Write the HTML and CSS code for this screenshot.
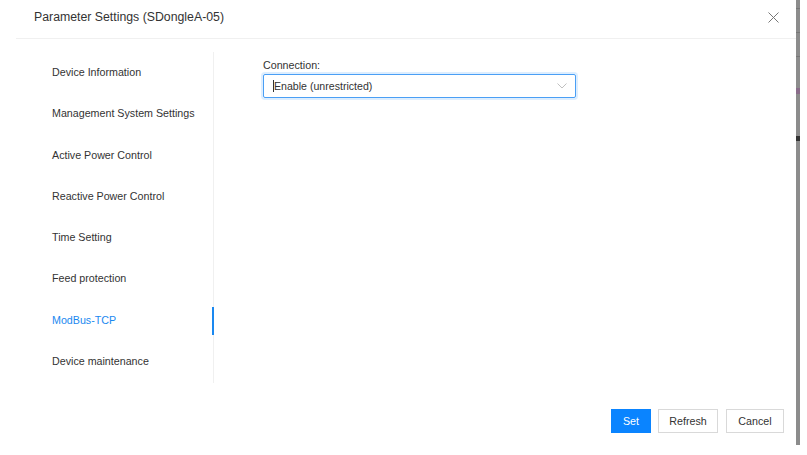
FILE: index.html
```html
<!DOCTYPE html>
<html>
<head>
<meta charset="utf-8">
<link rel="stylesheet" href="styles.css">
</head>
<body>
<div class="page">
  <div class="modal">
    <div class="header">
      <div class="title">Parameter Settings (SDongleA-05)</div>
      <button class="close" aria-label="Close">
        <svg width="11" height="11" viewBox="0 0 11 11"><path d="M0.5 0.5L10.5 10.5M10.5 0.5L0.5 10.5" stroke="#777" stroke-width="1" fill="none"/></svg>
      </button>
    </div>
    <div class="body">
      <nav class="nav">
        <div class="item">Device Information</div>
        <div class="item">Management System Settings</div>
        <div class="item">Active Power Control</div>
        <div class="item">Reactive Power Control</div>
        <div class="item">Time Setting</div>
        <div class="item">Feed protection</div>
        <div class="item active">ModBus-TCP</div>
        <div class="item">Device maintenance</div>
      </nav>
      <div class="content">
        <div class="label">Connection:</div>
        <div class="select">
          <span class="caret"></span><span class="value">Enable (unrestricted)</span>
          <svg class="chev" width="10" height="6" viewBox="0 0 10 6"><path d="M0.5 0.5L5 5L9.5 0.5" stroke="#c0c0c0" stroke-width="1" fill="none"/></svg>
        </div>
      </div>
    </div>
    <div class="footer">
      <button class="btn primary">Set</button>
      <button class="btn">Refresh</button>
      <button class="btn">Cancel</button>
    </div>
  </div>
  <div class="backdrop">
    <span class="mark m1"></span>
    <span class="mark m2"></span>
    <span class="mark m3"></span>
    <span class="mark m4"></span>
    <span class="mark m5"></span>
  </div>
</div>
</body>
</html>
```

FILE: styles.css
```css
* { box-sizing: border-box; }
html, body { margin: 0; padding: 0; background: #fff; }
body { font-family: "Liberation Sans", Arial, sans-serif; color: #333; }
.page { display: flex; width: 807px; height: 455px; }
.modal { width: 796px; height: 455px; background: #fff; display: flex; flex-direction: column; }
.header {
  height: 39px; margin-left: 16px; border-bottom: 1px solid #f0f0f0;
  display: flex; align-items: center; justify-content: space-between;
  padding-left: 18px; padding-right: 17px; padding-bottom: 4px;
}
.title { font-size: 12.3px; color: #333; }
.close { border: 0; background: none; padding: 0; width: 11px; height: 11px; display: flex; cursor: pointer; }
.body { display: flex; flex: 1; padding-top: 13px; }
.nav { width: 214px; border-right: 1px solid #f0f0f0; height: 331px; position: relative; }
.item { height: 41.3px; line-height: 41.3px; padding-left: 52px; font-size: 10.7px; color: #333; position: relative; white-space: nowrap; }
.item.active { color: #1a88f0; }
.item.active::after { content: ""; position: absolute; right: -1px; top: 7px; width: 2px; height: 28px; background: #1a88f0; }
.content { padding-left: 49px; padding-top: 7px; }
.label { font-size: 10.7px; color: #333; line-height: 13px; margin-bottom: 2px; }
.select {
  width: 313px; height: 24px; border: 1px solid #4a9ff5; border-radius: 2px;
  box-shadow: 0 0 0 2px rgba(24,144,255,0.15);
  display: flex; align-items: center; padding-left: 9px; padding-right: 8px; position: relative;
}
.caret { width: 1px; height: 12px; background: #333; }
.value { font-size: 10.6px; color: #333; flex: 1; }
.footer { height: 70px; display: flex; justify-content: flex-end; gap: 7px; padding-right: 12px; padding-top: 24px; margin-top: auto; }
.btn {
  height: 24px; border: 1px solid #d9d9d9; background: #fff; color: #333;
  font-family: "Liberation Sans", Arial, sans-serif; font-size: 10.7px; padding: 0; border-radius: 0;
}
.btn.primary { background: #0a84ff; border-color: #0a84ff; color: #fff; width: 40px; }
.btn:nth-child(2) { width: 60px; }
.btn:nth-child(3) { width: 58px; margin-left: 1px; }
.backdrop { width: 11px; height: 455px; position: relative; background: #fff; }
.backdrop::before { content: ""; position: absolute; left: 0; top: 0; width: 4px; height: 445px; background: #8c8c8c; }
.mark { position: absolute; left: 0; width: 4px; height: 1px; background: #777; }
.m1 { top: 8px; } .m2 { top: 32px; } .m3 { top: 56px; } .m4 { top: 88px; height: 6px; background: #8a6d8a; } .m5 { top: 136px; height: 5px; background: #333; }
```
